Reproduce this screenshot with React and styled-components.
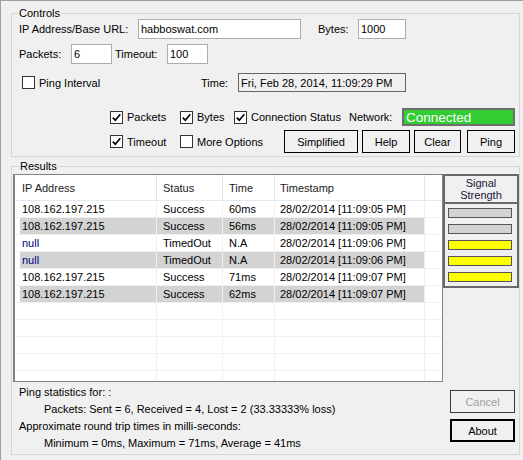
import React from "react";
import styled, { createGlobalStyle } from "styled-components";

const GlobalStyle = createGlobalStyle`
  html, body { margin: 0; padding: 0; background: #f0f0f0; }
  body {
    font-family: "Liberation Sans", Arial, sans-serif;
    font-size: 11px;
    color: #000;
  }
  * { box-sizing: border-box; }
`;

const Window = styled.div`
  width: 523px;
  height: 460px;
  border-top: 1px solid #a0a0a0;
  border-left: 1px solid #a0a0a0;
  padding: 6px 3px 0 10px;
  overflow: hidden;
  display: flex;
  flex-direction: column;
`;

const Group = styled.fieldset`
  margin: ${(p) => p.$top}px 0 0 0;
  padding: 0 0 ${(p) => p.$bottom}px 0;
  border: 1px solid #d5d5d5;
  min-width: 0;
`;

const Legend = styled.legend`
  margin-left: ${(p) => p.$indent}px;
  padding: 0 1px;
  line-height: 12px;
  font-size: 11px;
`;

const Row = styled.div`
  display: flex;
  align-items: center;
  height: ${(p) => p.$h}px;
  margin-top: ${(p) => p.$mt || 0}px;
`;

const Label = styled.span`
  flex: none;
  width: ${(p) => p.$w}px;
  margin-left: ${(p) => p.$ml || 0}px;
  white-space: nowrap;
`;

const TextBox = styled.input`
  flex: none;
  width: ${(p) => p.$w}px;
  height: 20px;
  margin: 0;
  padding: 0 2px;
  border: 1px solid #abadb3;
  background: #fff;
  font: inherit;
  color: #000;
  outline: none;
`;

const TimeBox = styled.div`
  flex: none;
  width: 168px;
  height: 19px;
  border: 1px solid #646464;
  padding-left: 2px;
  display: flex;
  align-items: center;
  white-space: nowrap;
`;

const CheckItem = styled.label`
  flex: none;
  display: flex;
  align-items: center;
  gap: 4px;
  width: ${(p) => p.$w}px;
  margin-left: ${(p) => p.$ml || 0}px;
  white-space: nowrap;
`;

const Box = styled.span`
  flex: none;
  width: 13px;
  height: 13px;
  border: 1px solid #333;
  background: #fff;
  display: flex;
  align-items: center;
  justify-content: center;
`;

const StatusBox = styled.div`
  flex: none;
  width: 113px;
  height: 18px;
  background: #32cd32;
  border: 2px solid #6e6e6e;
  color: #fff;
  font-size: 13.5px;
  padding-left: 2px;
  display: flex;
  align-items: center;
  white-space: nowrap;
`;

const Button = styled.button`
  flex: none;
  width: ${(p) => p.$w}px;
  height: 23px;
  margin: 0 0 0 ${(p) => p.$ml || 0}px;
  padding: 0;
  border: ${(p) => (p.$default ? 2 : 1)}px solid ${(p) => (p.disabled ? "#3c3c3c" : "#000")};
  background: #f0f0f0;
  font: inherit;
  color: ${(p) => (p.disabled ? "#a0a0a0" : "#000")};
`;

const ResultsMain = styled.div`
  display: flex;
  align-items: flex-start;
  margin-top: 2px;
`;

const ListView = styled.div`
  flex: none;
  width: 430px;
  height: 208px;
  margin-left: 1px;
  background: #fff;
  border: 1px solid #828282;
  border-left-width: 2px;
  overflow: hidden;
`;

const COLS = "142px 66px 52px 150px 1fr";

const Header = styled.div`
  display: grid;
  grid-template-columns: ${COLS};
  height: 26px;
  border-bottom: 1px solid #e3e9f0;
`;

const HeaderCell = styled.div`
  display: flex;
  align-items: center;
  padding-left: ${(p) => p.$pad}px;
  border-right: ${(p) => (p.$last ? "none" : "1px solid #e5e5e5")};
  white-space: nowrap;
  color: #1a1a1a;
`;

const DataRow = styled.div`
  display: grid;
  grid-template-columns: ${COLS};
  height: 17px;
  border-bottom: 1px solid #f0f0f0;
`;

const Cell = styled.div`
  display: flex;
  align-items: center;
  margin-left: ${(p) => (p.$first ? 5 : 0)}px;
  padding-left: ${(p) => p.$pad}px;
  border-right: ${(p) => (p.$last ? "none" : "1px solid #f0f0f0")};
  background: ${(p) => (p.$shade ? "#d3d3d3" : "transparent")};
  color: ${(p) => p.$color || "#000"};
  white-space: nowrap;
  overflow: hidden;
`;

const SignalPanel = styled.div`
  flex: none;
  width: 76px;
  height: 114px;
  border: 2px solid #696969;
  display: flex;
  flex-direction: column;
`;

const SignalHeader = styled.div`
  height: 28px;
  border-bottom: 2px solid #696969;
  display: flex;
  align-items: center;
  justify-content: center;
  text-align: center;
  line-height: 12px;
  color: #16163a;
`;

const Bars = styled.div`
  display: flex;
  flex-direction: column;
  gap: 6px;
  padding: 4px 0 0 3px;
`;

const Bar = styled.div`
  width: 64px;
  height: 10px;
  border: 1px solid #555;
  background: ${(p) => (p.$on ? "#ffff00" : "#d3d3d3")};
`;

const BottomRow = styled.div`
  display: flex;
  align-items: flex-start;
  margin-top: 2px;
`;

const Stats = styled.div`
  padding-left: 7px;
  line-height: 17px;
`;

const StatLine = styled.div`
  padding-left: ${(p) => (p.$indent ? 25 : 0)}px;
  white-space: nowrap;
`;

const ButtonCol = styled.div`
  margin: 6px 4px 0 auto;
  display: flex;
  flex-direction: column;
  gap: 6px;
`;

const Check = ({ checked, children, w, ml }) => (
  <CheckItem $w={w} $ml={ml}>
    <Box>
      {checked && (
        <svg width="11" height="11" viewBox="0 0 11 11">
          <path d="M1.8 5.6 L4.3 8.2 L9.3 2.2" fill="none" stroke="#000" strokeWidth="1.7" />
        </svg>
      )}
    </Box>
    {children}
  </CheckItem>
);

const rows = [
  ["108.162.197.215", "Success", "60ms", "28/02/2014 [11:09:05 PM]"],
  ["108.162.197.215", "Success", "56ms", "28/02/2014 [11:09:05 PM]"],
  ["null", "TimedOut", "N.A", "28/02/2014 [11:09:06 PM]"],
  ["null", "TimedOut", "N.A", "28/02/2014 [11:09:06 PM]"],
  ["108.162.197.215", "Success", "71ms", "28/02/2014 [11:09:07 PM]"],
  ["108.162.197.215", "Success", "62ms", "28/02/2014 [11:09:07 PM]"],
];

const PADS = [2, 6, 6, 5];
const signal = [false, false, true, true, true];

export default function App() {
  return (
    <>
      <GlobalStyle />
      <Window>
        <Group $top={0} $bottom={3}>
          <Legend $indent={6}>Controls</Legend>
          <Row $h={20}>
            <Label $ml={7} $w={119}>IP Address/Base URL:</Label>
            <TextBox $w={163} readOnly defaultValue="habboswat.com" />
            <Label $ml={17} $w={40}>Bytes:</Label>
            <TextBox $w={48} readOnly defaultValue="1000" />
          </Row>
          <Row $h={20} $mt={5}>
            <Label $ml={7} $w={52}>Packets:</Label>
            <TextBox $w={41} readOnly defaultValue="6" />
            <Label $ml={3} $w={52}>Timeout:</Label>
            <TextBox $w={41} readOnly defaultValue="100" />
          </Row>
          <Row $h={19} $mt={9}>
            <Check w={179} ml={10}>Ping Interval</Check>
            <Label $w={37}>Time:</Label>
            <TimeBox>Fri, Feb 28, 2014, 11:09:29 PM</TimeBox>
          </Row>
          <Row $h={18} $mt={16}>
            <Check checked w={70} ml={98}>Packets</Check>
            <Check checked w={54}>Bytes</Check>
            <Check checked w={115}>Connection Status</Check>
            <Label $w={53}>Network:</Label>
            <StatusBox>Connected</StatusBox>
          </Row>
          <Row $h={23} $mt={4}>
            <Check checked w={70} ml={98}>Timeout</Check>
            <Check w={104}>More Options</Check>
            <Button $w={74}>Simplified</Button>
            <Button $w={48} $ml={4}>Help</Button>
            <Button $w={47} $ml={4}>Clear</Button>
            <Button $w={48} $ml={6}>Ping</Button>
          </Row>
        </Group>

        <Group $top={3} $bottom={2}>
          <Legend $indent={7}>Results</Legend>
          <ResultsMain>
            <ListView>
              <Header>
                <HeaderCell $pad={7}>IP Address</HeaderCell>
                <HeaderCell $pad={6}>Status</HeaderCell>
                <HeaderCell $pad={6}>Time</HeaderCell>
                <HeaderCell $pad={5}>Timestamp</HeaderCell>
                <HeaderCell $pad={0} $last />
              </Header>
              {rows.map((r, i) => (
                <DataRow key={i}>
                  {r.map((v, j) => (
                    <Cell
                      key={j}
                      $first={j === 0}
                      $pad={PADS[j]}
                      $shade={i % 2 === 1}
                      $color={v === "null" ? "#000080" : undefined}
                    >
                      {v}
                    </Cell>
                  ))}
                  <Cell $pad={0} $last />
                </DataRow>
              ))}
              {Array.from({ length: 5 }).map((_, i) => (
                <DataRow key={"e" + i}>
                  <Cell $pad={0} />
                  <Cell $pad={0} />
                  <Cell $pad={0} />
                  <Cell $pad={0} />
                  <Cell $pad={0} $last />
                </DataRow>
              ))}
            </ListView>
            <SignalPanel>
              <SignalHeader>
                Signal
                <br />
                Strength
              </SignalHeader>
              <Bars>
                {signal.map((on, i) => (
                  <Bar key={i} $on={on} />
                ))}
              </Bars>
            </SignalPanel>
          </ResultsMain>
          <BottomRow>
            <Stats>
              <StatLine>Ping statistics for: :</StatLine>
              <StatLine $indent>Packets: Sent = 6, Received = 4, Lost = 2 (33.33333% loss)</StatLine>
              <StatLine>Approximate round trip times in milli-seconds:</StatLine>
              <StatLine $indent>Minimum = 0ms, Maximum = 71ms, Average = 41ms</StatLine>
            </Stats>
            <ButtonCol>
              <Button $w={65} disabled>Cancel</Button>
              <Button $w={65} $default>About</Button>
            </ButtonCol>
          </BottomRow>
        </Group>
      </Window>
    </>
  );
}
